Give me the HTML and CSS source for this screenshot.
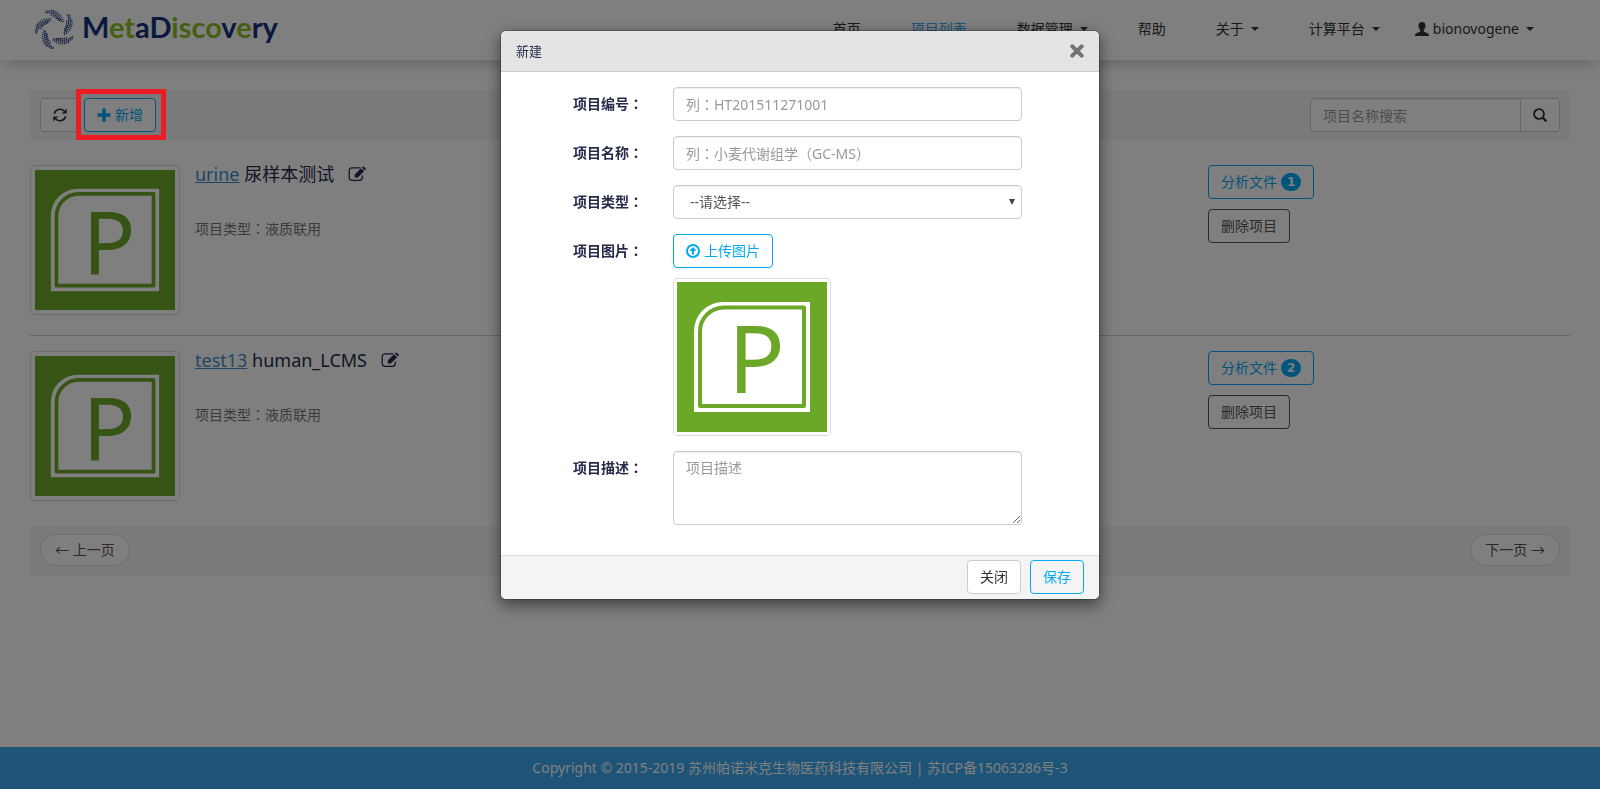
FILE: index.html
```html
<!DOCTYPE html>
<html lang="zh-CN">
<head>
<meta charset="utf-8">
<meta name="viewport" content="width=device-width, initial-scale=1">
<title>MetaDiscovery</title>
<link rel="stylesheet" href="styles.css">
</head>
<body>
<svg class="sprite" aria-hidden="true">
  <symbol id="frame" viewBox="0 0 150 150">
    <rect width="150" height="150" fill="#6ca828"/>
    <path d="M17 130V49A29 29 0 0 1 46 20H133V130Z" fill="#fff"/>
    <path d="M23 124V50A24 24 0 0 1 47 25.500H127V124Z" fill="#fff" stroke="#6ca828" stroke-width="4" stroke-linejoin="round"/>
  </symbol>
  <symbol id="edit" viewBox="0 0 18 16">
    <path d="M12.500 1.800H4A2.800 2.800 0 0 0 1.200 4.600v7A2.800 2.800 0 0 0 4 14.400h7.500a2.800 2.800 0 0 0 2.800-2.800V9.500" fill="none" stroke="currentColor" stroke-width="1.300"/>
    <path d="M6.800 11.600V8.600l6.300-6.300 3 3-6.300 6.300zM13.900 1.500l.8-.8q.6-.5 1.200 0l1.700 1.700q.5.600 0 1.200l-.8.800z" fill="currentColor"/>
  </symbol>
  <symbol id="arm" viewBox="0 0 40 40">
    <path d="M17 1.200Q26 3 28.500 13.500" stroke-width="1.400"/>
    <path d="M12 2Q23 2 27 14" stroke-width="1.600"/>
    <path d="M10.500 3.500Q21 3.500 25.500 13" stroke-width="1.600"/>
    <path d="M16 6.300Q21 7.500 24 12" stroke-width="1.500"/>
  </symbol>
</svg>

<header class="site-header">
  <a class="brand" href="#" aria-label="MetaDiscovery">
    <svg class="brand-mark" viewBox="0 0 40 40" fill="none" stroke="#1d3a80" stroke-linecap="round" stroke-dasharray="0 2.100">
      <use href="#arm"/>
      <use href="#arm" transform="rotate(72 20 20)"/>
      <use href="#arm" transform="rotate(144 20 20)"/>
      <use href="#arm" transform="rotate(216 20 20)"/>
      <use href="#arm" transform="rotate(288 20 20)"/>
    </svg>
    <span class="brand-name">M<i>et</i>aD<i>isco</i>v<i>e</i>ry</span>
  </a>
  <nav class="nav">
    <a href="#">首页</a>
    <a href="#" class="active">项目列表</a>
    <a href="#">数据管理<span class="caret"></span></a>
    <a href="#">帮助</a>
    <a href="#">关于<span class="caret"></span></a>
    <a href="#">计算平台<span class="caret"></span></a>
    <a href="#" class="user"><svg class="icon user-icon" viewBox="0 0 14 14"><path d="M7 0c2.300 0 3.500 1.600 3.500 3.800 0 1.700-.6 3.200-1.700 4.200v1.200c0 .6 1 .8 2.600 1.500 1.700.7 2.600 1.300 2.600 2.300v1H0v-1c0-1 .9-1.600 2.600-2.300 1.600-.7 2.600-.9 2.600-1.500V8C4.100 7 3.500 5.500 3.500 3.800 3.500 1.600 4.700 0 7 0z" fill="currentColor"/></svg>bionovogene<span class="caret"></span></a>
  </nav>
</header>

<main class="page">
  <div class="bar">
    <div class="bar-group">
      <button class="btn" type="button" aria-label="刷新"><svg class="icon" viewBox="0 0 14 14"><path d="M1.200 5.700A6 6 0 0 1 11.200 3M12.800 8.300A6 6 0 0 1 2.800 11" fill="none" stroke="currentColor" stroke-width="1.700"/><path d="M13.700.600v5H8.700zM.300 13.400v-5h5z" fill="currentColor"/></svg></button>
      <div class="marked">
        <button class="btn btn-blue" type="button"><svg class="icon" viewBox="0 0 14 14"><path d="M5.200.500h3.600v4.700h4.700v3.600H8.800v4.700H5.200V8.800H.500V5.200h4.700z" fill="currentColor"/></svg>新增</button>
        <span class="marker"></span>
      </div>
    </div>
    <form class="search">
      <input class="field" type="text" placeholder="项目名称搜索" aria-label="项目名称搜索">
      <button class="btn" type="button" aria-label="搜索"><svg class="icon" viewBox="0 0 14 14"><circle cx="6" cy="6" r="4.900" fill="none" stroke="currentColor" stroke-width="1.900"/><path d="M9.500 9.500l3.800 3.800" stroke="currentColor" stroke-width="2.300"/></svg></button>
    </form>
  </div>

  <section class="projects">
    <article class="project">
      <svg class="thumb" viewBox="0 0 150 150"><use href="#frame"/><text class="cover-letter" x="51" y="111">P</text></svg>
      <div class="info">
        <h2><a href="#">urine</a> 尿样本测试 <svg class="edit"><use href="#edit"/></svg></h2>
        <p>项目类型<span lang="zh-TW" class="colon">：</span>液质联用</p>
      </div>
      <div class="actions">
        <button class="btn btn-blue" type="button">分析文件<span class="badge">1</span></button>
        <button class="btn btn-dark" type="button">删除项目</button>
      </div>
    </article>
    <article class="project">
      <svg class="thumb" viewBox="0 0 150 150"><use href="#frame"/><text class="cover-letter" x="51" y="111">P</text></svg>
      <div class="info">
        <h2><a href="#">test13</a> human_LCMS <svg class="edit"><use href="#edit"/></svg></h2>
        <p>项目类型<span lang="zh-TW" class="colon">：</span>液质联用</p>
      </div>
      <div class="actions">
        <button class="btn btn-blue" type="button">分析文件<span class="badge">2</span></button>
        <button class="btn btn-dark" type="button">删除项目</button>
      </div>
    </article>
  </section>

  <nav class="bar">
    <a class="pager" href="#">← 上一页</a>
    <a class="pager" href="#">下一页 →</a>
  </nav>
</main>

<footer class="site-footer">Copyright © 2015-2019 苏州帕诺米克生物医药科技有限公司 | 苏ICP备15063286号-3</footer>

<div class="overlay">
  <div class="modal" role="dialog" aria-labelledby="modal-title">
    <div class="modal-header">
      <h1 id="modal-title">新建</h1>
      <button class="close" type="button" aria-label="关闭"><svg class="icon" viewBox="0 0 14 14"><path d="M2.300 2.300l9.400 9.400M11.700 2.300l-9.400 9.400" stroke="currentColor" stroke-width="4" stroke-linecap="round"/></svg></button>
    </div>
    <form class="modal-body">
      <label for="code">项目编号<span lang="zh-TW" class="colon">：</span></label>
      <input class="field centred-marks" lang="zh-TW" id="code" type="text" placeholder="列：HT201511271001">
      <label for="name">项目名称<span lang="zh-TW" class="colon">：</span></label>
      <input class="field centred-marks" lang="zh-TW" id="name" type="text" placeholder="列：小麦代谢组学（GC-MS）">
      <label for="type">项目类型<span lang="zh-TW" class="colon">：</span></label>
      <div class="select">
        <select class="field" id="type"><option>--请选择--</option></select>
        <svg class="arrow" viewBox="0 0 6 6"><path d="M0 0h6L3 6z" fill="#444"/></svg>
      </div>
      <label for="upload">项目图片<span lang="zh-TW" class="colon">：</span></label>
      <div class="upload">
        <button class="btn btn-blue" id="upload" type="button"><svg class="icon" viewBox="0 0 14 14"><circle cx="7" cy="7" r="6" fill="none" stroke="currentColor" stroke-width="2"/><path d="M7 3l3.500 4H8v3.500H6V7H3.500z" fill="currentColor"/></svg>上传图片</button>
        <svg class="thumb thumb-large" viewBox="0 0 150 150"><use href="#frame"/><text class="cover-letter" x="51" y="111">P</text></svg>
      </div>
      <label for="desc">项目描述<span lang="zh-TW" class="colon">：</span></label>
      <textarea class="field" id="desc" placeholder="项目描述"></textarea>
    </form>
    <div class="modal-footer">
      <button class="btn" type="button">关闭</button>
      <button class="btn btn-blue btn-clear" type="button">保存</button>
    </div>
  </div>
</div>
</body>
</html>
```

FILE: styles.css
```css
* {
  box-sizing: border-box;
}

body {
  margin: 0;
  min-height: 100vh;
  display: flex;
  flex-direction: column;
  background: #fff;
  color: #262b4d;
  font: 14px/20px "Noto Sans", "Noto Sans CJK SC", sans-serif;
}

.sprite {
  position: absolute;
  width: 0;
  height: 0;
}

.cover-letter {
  font: 94px "Noto Sans", sans-serif;
  fill: #6ca828;
}

.colon,
.centred-marks {
  font-family: "Noto Sans", "Noto Sans CJK TC", sans-serif;
}

.icon {
  width: 14px;
  height: 14px;
  flex: none;
}

/* Header */

.site-header {
  display: flex;
  align-items: center;
  justify-content: space-between;
  height: 60px;
  padding: 0 66px 2px 35px;
  box-shadow: 0 8px 14px -4px rgba(0, 0, 0, .2);
}

.brand {
  display: flex;
  align-items: center;
  gap: 7px;
  color: #12327c;
  text-decoration: none;
}

.brand-mark {
  width: 40px;
  height: 40px;
}

.brand-name {
  padding-bottom: 4px;
  font: 700 29px/36px Lato, sans-serif;
}

.brand-name i {
  font-style: normal;
  color: #8fbf26;
}

.nav {
  display: flex;
  gap: 50px;
}

.nav a {
  display: flex;
  align-items: center;
  color: #333;
  text-decoration: none;
}

.nav .active {
  color: #38a8f2;
}

.nav .user {
  margin-left: -15px;
}

.user-icon {
  margin-right: 4px;
}

.caret {
  margin-left: 7px;
  border: 4px solid transparent;
  border-top-color: currentColor;
  border-bottom: 0;
}

/* Controls */

.btn {
  display: inline-flex;
  align-items: center;
  gap: 4px;
  height: 34px;
  padding: 0 12px;
  border: 1px solid #ccc;
  border-radius: 4px;
  background: #fff;
  color: #333;
  font: inherit;
}

.btn-blue {
  border-color: #03a9f4;
  color: #03a9f4;
}

.btn-dark {
  border-color: #555;
  color: #555;
}

.btn-clear {
  background: transparent;
}

.badge {
  padding: 3px 6px;
  border-radius: 10px;
  background: #03a9f4;
  color: #fff;
  font: 700 12px/12px "DejaVu Sans", sans-serif;
  text-align: center;
}

.field {
  width: 100%;
  height: 34px;
  padding: 6px 12px;
  border: 1px solid #ccc;
  border-radius: 4px;
  background: #fff;
  box-shadow: inset 0 1px 1px rgba(0, 0, 0, .075);
  color: #555;
  font-size: 14px;
  line-height: 20px;
}

.field:not(.centred-marks) {
  font-family: inherit;
}

.field::placeholder {
  color: #999;
}

/* Page */

.page {
  flex: 1;
  padding: 30px;
}

.bar {
  display: flex;
  align-items: flex-start;
  justify-content: space-between;
  height: 50px;
  padding: 8px 10px;
  border-radius: 4px;
  background: #f5f5f5;
}

.bar-group {
  display: flex;
  gap: 4px;
}

.marked {
  position: relative;
}

.marker {
  position: absolute;
  inset: -9px -10px -8px -8px;
  z-index: 20;
  border: 5px solid #ed1c24;
}

.search {
  display: flex;
  width: 250px;
}

.search .field {
  border-radius: 4px 0 0 4px;
}

.search .btn {
  margin-left: -1px;
  border-radius: 0 4px 4px 0;
}

.projects {
  margin: 10px 0 5px;
}

.project {
  display: grid;
  grid-template-columns: 150px 1fr 362px;
  column-gap: 15px;
  padding: 15px 0 20px;
}

.project + .project {
  border-top: 1px solid #ccc;
}

.thumb {
  display: block;
  width: 150px;
  height: 150px;
  padding: 4px;
  border: 1px solid #ddd;
  border-radius: 4px;
}

.thumb-large {
  width: 158px;
  height: 158px;
  padding: 3px;
}

.info h2 {
  margin: 0;
  font-size: 18px;
  line-height: 18px;
  font-weight: 400;
}

.info a {
  color: #428bca;
}

.edit {
  width: 18px;
  height: 16px;
  margin-left: 9px;
  vertical-align: -1px;
}

.info p {
  margin: 36px 0 0;
  color: #777;
}

.actions {
  display: flex;
  flex-direction: column;
  align-items: flex-start;
  gap: 10px;
}

.pager {
  padding: 5px 14px;
  border: 1px solid #ddd;
  border-radius: 16px;
  background: #fff;
  color: #555;
  text-decoration: none;
}

.site-footer {
  padding: 11px;
  background: #3aa8f0;
  color: #fff;
  text-align: center;
}

/* Modal */

.overlay {
  position: fixed;
  inset: 0;
  z-index: 10;
  padding: 30px 10px;
  overflow: auto;
  background: rgba(0, 0, 0, .5);
}

.modal {
  max-width: 600px;
  margin: 0 auto;
  border: 1px solid rgba(0, 0, 0, .2);
  border-radius: 6px;
  background: #fff;
  background-clip: padding-box;
  box-shadow: 0 5px 15px rgba(0, 0, 0, .5);
  overflow: hidden;
}

.modal-header {
  display: flex;
  align-items: center;
  justify-content: space-between;
  padding: 10px 15px;
  border-bottom: 1px solid #ccc;
  background: #e4e4e4;
}

.modal-header h1 {
  margin: 0;
  font-size: 13px;
  line-height: 20px;
  font-weight: 400;
}

.close {
  display: flex;
  padding: 0;
  border: 0;
  background: none;
  color: #727272;
}

.modal-body {
  display: grid;
  grid-template-columns: 127px 1fr;
  gap: 15px 30px;
  padding: 15px 77px 30px 15px;
}

.modal-body label {
  padding-top: 7px;
  font-weight: 700;
  text-align: right;
}

.select {
  position: relative;
}

.select select {
  padding-left: 16px;
  appearance: none;
}

.arrow {
  position: absolute;
  top: 14px;
  right: 7px;
  width: 6px;
  height: 6px;
  pointer-events: none;
}

.upload .thumb {
  margin-top: 10px;
}

.modal-body textarea {
  display: block;
  height: 74px;
  resize: vertical;
}

.modal-footer {
  display: flex;
  justify-content: flex-end;
  gap: 9px;
  padding: 4px 15px 5px;
  border-top: 1px solid #ddd;
  background: #f4f4f4;
}
```
